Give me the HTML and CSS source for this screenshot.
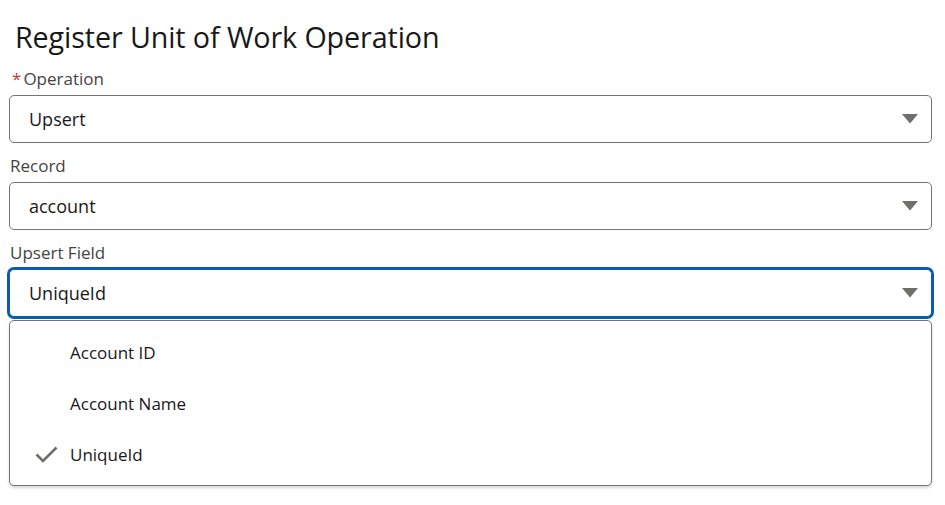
FILE: index.html
```html
<!DOCTYPE html>
<html lang="en">
<head>
<meta charset="utf-8">
<title>Register Unit of Work Operation</title>
<link rel="stylesheet" href="styles.css">
</head>
<body>
<div class="panel">
  <h1 class="title">Register Unit of Work Operation</h1>

  <div class="field">
    <label class="label"><abbr class="req">*</abbr>Operation</label>
    <div class="combo">
      <span class="value">Upsert</span>
      <svg class="caret" width="16" height="10" viewBox="0 0 16 10"><path d="M0 0 H16 L8 9.5 Z" fill="#706e6b"/></svg>
    </div>
  </div>

  <div class="field">
    <label class="label">Record</label>
    <div class="combo">
      <span class="value">account</span>
      <svg class="caret" width="16" height="10" viewBox="0 0 16 10"><path d="M0 0 H16 L8 9.5 Z" fill="#706e6b"/></svg>
    </div>
  </div>

  <div class="field">
    <label class="label">Upsert Field</label>
    <div class="combo focus">
      <span class="value">UniqueId</span>
      <svg class="caret" width="16" height="10" viewBox="0 0 16 10"><path d="M0 0 H16 L8 9.5 Z" fill="#706e6b"/></svg>
    </div>
    <ul class="listbox">
      <li class="option"><span class="check"></span><span>Account ID</span></li>
      <li class="option"><span class="check"></span><span>Account Name</span></li>
      <li class="option selected"><span class="check"><svg width="23" height="17" viewBox="0 0 23 17"><path d="M1.5 8.5 L8 15 L21.5 1.5" fill="none" stroke="#706e6b" stroke-width="2.6"/></svg></span><span>UniqueId</span></li>
    </ul>
  </div>
</div>
</body>
</html>
```
FILE: styles.css
```css
html, body {
  margin: 0;
  padding: 0;
  background: #ffffff;
}
body {
  font-family: "Open Sans", "Noto Sans", sans-serif;
  color: #181818;
}
.panel {
  width: 923px;
  padding: 19px 0 0 9px;
}
.title {
  margin: 0 0 12px 6px;
  font-size: 28.7px;
  font-weight: 400;
  line-height: 36px;
  color: #181818;
  letter-spacing: -0.1px;
}
.field {
  display: flex;
  flex-direction: column;
  margin-bottom: 11px;
}
.label {
  font-size: 17px;
  line-height: 24px;
  color: #444444;
  margin-bottom: 4px;
  padding-left: 1px;
}
.req {
  color: #c23934;
  text-decoration: none;
  margin: 0 2px 0 2px;
}
.combo {
  box-sizing: border-box;
  height: 48px;
  border: 1px solid #747474;
  border-radius: 5px;
  display: flex;
  align-items: center;
  justify-content: space-between;
  padding: 0 13px 0 19px;
  background: #fff;
}
.combo.focus {
  border-color: #0b5cab;
  box-shadow: 0 0 0 2px #0b5cab;
}
.value {
  font-size: 18px;
  color: #181818;
}
.caret {
  display: block;
}
.listbox {
  list-style: none;
  margin: 3px 0 0;
  padding: 6px 0 5px;
  border: 1px solid #747474;
  border-radius: 5px;
  box-shadow: 0 2px 3px rgba(0, 0, 0, 0.16);
  background: #fff;
}
.option {
  height: 51px;
  display: flex;
  align-items: center;
  font-size: 17px;
  color: #181818;
}
.check {
  width: 23px;
  height: 17px;
  margin: 0 12px 0 25px;
  display: flex;
}
```
